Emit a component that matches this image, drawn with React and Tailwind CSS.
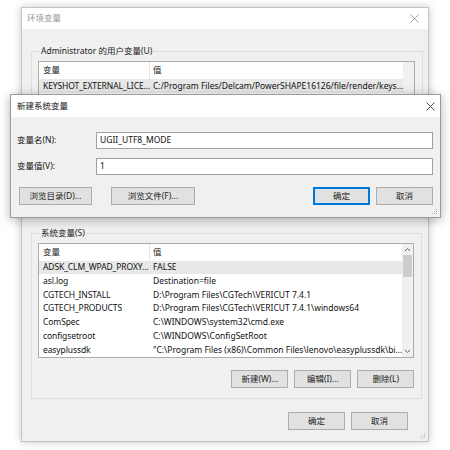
import React from 'react';

const font = "font-['Noto_Sans','Noto_Sans_CJK_SC',sans-serif]";

const CloseIcon = ({ color }) => (
  <svg width="9" height="9" viewBox="0 0 9 9">
    <path d="M0.5 0.5 L8.5 8.5 M8.5 0.5 L0.5 8.5" stroke={color} strokeWidth="0.9" fill="none" />
  </svg>
);

const Chevron = ({ up }) => (
  <svg width="7" height="5" viewBox="0 0 7 5">
    <path d={up ? 'M1 4 L3.5 1.5 L6 4' : 'M1 1 L3.5 3.5 L6 1'} stroke="#606060" strokeWidth="1" fill="none" />
  </svg>
);

const Grip = () => (
  <svg className="absolute right-[2px] bottom-[2px]" width="6" height="6" viewBox="0 0 6 6">
    <rect x="4" y="0" width="1" height="1" fill="#b0b0b0" />
    <rect x="2" y="2" width="1" height="1" fill="#b0b0b0" />
    <rect x="4" y="2" width="1" height="1" fill="#b0b0b0" />
    <rect x="0" y="4" width="1" height="1" fill="#b0b0b0" />
    <rect x="2" y="4" width="1" height="1" fill="#b0b0b0" />
    <rect x="4" y="4" width="1" height="1" fill="#b0b0b0" />
  </svg>
);

const Button = ({ children, w = 'w-[57px]', primary }) => (
  <div
    className={`${w} h-[18px] flex items-center justify-center bg-[#e1e1e1] border ${
      primary ? 'border-[#0078d7] shadow-[inset_0_0_0_1px_#0078d7]' : 'border-[#adadad]'
    } text-[8.5px] text-[#222]`}
  >
    {children}
  </div>
);

const systemVars = [
  ['ADSK_CLM_WPAD_PROXY…', 'FALSE'],
  ['asl.log', 'Destination=file'],
  ['CGTECH_INSTALL', 'D:\\Program Files\\CGTech\\VERICUT 7.4.1'],
  ['CGTECH_PRODUCTS', 'D:\\Program Files\\CGTech\\VERICUT 7.4.1\\windows64'],
  ['ComSpec', 'C:\\WINDOWS\\system32\\cmd.exe'],
  ['configsetroot', 'C:\\WINDOWS\\ConfigSetRoot'],
  ['easyplussdk', '"C:\\Program Files (x86)\\Common Files\\lenovo\\easyplussdk\\bi…'],
];

// only the first row shows; the dialog covers the rest
const userVars = [
  ['KEYSHOT_EXTERNAL_LICE…', 'C:/Program Files/Delcam/PowerSHAPE16126/file/render/keys…'],
];

const VarList = ({ rows, height, arrows }) => (
  <div className={`flex border border-[#acacac] bg-white ${height}`}>
    <div className="flex-1 flex flex-col overflow-hidden">
      <div className="h-[17px] flex items-center text-[8.5px] text-[#222]">
        <div className="w-[111px] pl-[4px] h-full flex items-center border-r border-[#e5e5e5]">变量</div>
        <div className="pl-[3px]">值</div>
      </div>
      {rows.map(([name, value], i) => (
        <div
          key={name}
          className={`h-[14px] flex items-center text-[8.5px] text-[#111] whitespace-nowrap ${i === 0 ? 'bg-[#e8e8e8]' : ''}`}
        >
          <div className="w-[111px] shrink-0 pl-[4px] tracking-[-0.1px]">{name}</div>
          <div className="pl-[3px] overflow-hidden">{value}</div>
        </div>
      ))}
    </div>
    <div className="w-[11px] bg-[#f0f0f0] flex flex-col items-center">
      {arrows && (
        <>
          <div className="h-[11px] flex items-center justify-center">
            <Chevron up />
          </div>
          <div className="w-[9px] h-[22px] bg-[#cdcdcd]" />
          <div className="flex-1" />
          <div className="h-[12px] flex items-center justify-center">
            <Chevron />
          </div>
        </>
      )}
    </div>
  </div>
);

export default function App() {
  return (
    <div className={`relative w-[450px] h-[450px] bg-white overflow-hidden ${font}`}>
      {/* main window */}
      <div className="ml-[21px] mt-[7px] w-[408px] h-[435px] flex flex-col border border-[#c4c4c4] shadow-[0_0_8px_rgba(0,0,0,0.22)]">
        <div className="h-[21px] bg-white flex items-center justify-between pl-[5px] pr-[9px]">
          <span className="text-[8.5px] text-[#9a9a9a]">环境变量</span>
          <CloseIcon color="#9a9a9a" />
        </div>
        <div className="relative flex-1 bg-[#f0f0f0] flex flex-col pl-[9px] pr-[8px]">
          <fieldset className="mt-[16px] h-[173px] border border-[#dcdcdc] px-[6px] pr-[7px]">
            <legend className="ml-[2px] px-[1px] text-[8.5px] text-[#222] leading-[12px]">
              Administrator 的用户变量(U)
            </legend>
            <div className="mt-[4px]">
              <VarList rows={userVars} height="h-[100px]" />
            </div>
          </fieldset>

          <fieldset className="mt-[9px] border border-[#dcdcdc] pl-[6px] pr-[7px] pb-[10px]">
            <legend className="ml-[2px] px-[1px] text-[8.5px] text-[#222] leading-[12px]">系统变量(S)</legend>
            <div className="mt-[4px]">
              <VarList rows={systemVars} height="h-[115px]" arrows />
            </div>
            <div className="mt-[12px] flex justify-end gap-[6px]">
              <Button>新建(W)...</Button>
              <Button>编辑(I)...</Button>
              <Button>删除(L)</Button>
            </div>
          </fieldset>

          <div className="mt-[13px] flex justify-end gap-[6px] pr-[12px]">
            <Button>确定</Button>
            <Button>取消</Button>
          </div>

          <Grip />
        </div>
      </div>

      {/* new system variable dialog */}
      <div className="absolute left-[10px] top-[94px] w-[431px] h-[124px] flex flex-col border border-[#9a9a9a] shadow-[0_2px_10px_rgba(0,0,0,0.3)]">
        <div className="h-[22px] bg-white flex items-center justify-between pl-[6px] pr-[5px]">
          <span className="text-[8.5px] text-[#111]">新建系统变量</span>
          <CloseIcon color="#333" />
        </div>
        <div className="relative flex-1 bg-[#f0f0f0] flex flex-col pl-[6px] pr-[7px]">
          <div className="mt-[15px] flex items-center">
            <div className="w-[79px] text-[8.5px] text-[#111]">变量名(N):</div>
            <div className="flex-1 h-[17px] bg-white border border-[#a0a0a0] flex items-center pl-[3px] text-[8.5px] text-[#111]">
              UGII_UTF8_MODE
            </div>
          </div>
          <div className="mt-[9px] flex items-center">
            <div className="w-[79px] text-[8.5px] text-[#111]">变量值(V):</div>
            <div className="flex-1 h-[17px] bg-white border border-[#a0a0a0] flex items-center pl-[3px] text-[8.5px] text-[#111]">
              1
            </div>
          </div>
          <div className="mt-[12px] flex items-center pl-[2px]">
            <Button w="w-[73px]">浏览目录(D)...</Button>
            <div className="ml-[19px]">
              <Button w="w-[84px]">浏览文件(F)...</Button>
            </div>
            <div className="flex-1" />
            <Button primary>确定</Button>
            <div className="ml-[6px]">
              <Button>取消</Button>
            </div>
          </div>
          <Grip />
        </div>
      </div>
    </div>
  );
}
